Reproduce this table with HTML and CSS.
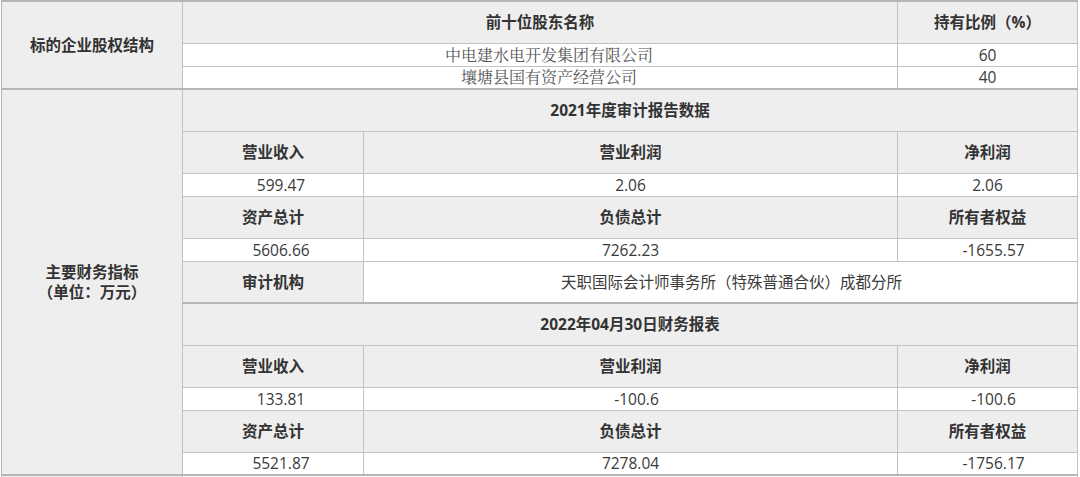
FILE: index.html
```html
<!DOCTYPE html>
<html lang="zh-CN">
<head>
<meta charset="utf-8">
<title>标的企业信息</title>
<link rel="stylesheet" href="styles.css">
</head>
<body>
<table class="info">
  <colgroup>
    <col class="c1">
    <col class="c2">
    <col class="c3">
    <col class="c4">
  </colgroup>
  <tbody>
    <tr class="sliver">
      <td></td><td></td><td colspan="2"></td>
    </tr>
    <tr class="hd sec">
      <th class="side" rowspan="3">标的企业股权结构</th>
      <th colspan="2">前十位股东名称</th>
      <th>持有比例（%）</th>
    </tr>
    <tr class="val">
      <td class="serif" colspan="2">中电建水电开发集团有限公司</td>
      <td>60</td>
    </tr>
    <tr class="val">
      <td class="serif" colspan="2">壤塘县国有资产经营公司</td>
      <td>40</td>
    </tr>

    <tr class="hd sec">
      <th class="side" rowspan="11">主要财务指标<br>（单位：万元）</th>
      <th colspan="3">2021年度审计报告数据</th>
    </tr>
    <tr class="hd">
      <th>营业收入</th><th>营业利润</th><th>净利润</th>
    </tr>
    <tr class="val">
      <td class="shift">599.47</td><td>2.06</td><td>2.06</td>
    </tr>
    <tr class="hd">
      <th>资产总计</th><th>负债总计</th><th>所有者权益</th>
    </tr>
    <tr class="val">
      <td class="shift">5606.66</td><td>7262.23</td><td class="nudge">-1655.57</td>
    </tr>
    <tr class="hd">
      <th>审计机构</th>
      <td class="plain" colspan="2">天职国际会计师事务所（特殊普通合伙）成都分所</td>
    </tr>
    <tr class="hd sec">
      <th colspan="3">2022年04月30日财务报表</th>
    </tr>
    <tr class="hd">
      <th>营业收入</th><th>营业利润</th><th>净利润</th>
    </tr>
    <tr class="val">
      <td class="shift">133.81</td><td class="nudge">-100.6</td><td class="nudge">-100.6</td>
    </tr>
    <tr class="hd">
      <th>资产总计</th><th>负债总计</th><th>所有者权益</th>
    </tr>
    <tr class="val">
      <td class="shift">5521.87</td><td>7278.04</td><td class="nudge">-1756.17</td>
    </tr>
    <tr class="tail sec">
      <th></th><td colspan="3"></td>
    </tr>
  </tbody>
</table>
</body>
</html>
```

FILE: styles.css
```css
html, body {
  margin: 0;
  padding: 0;
  background: #ffffff;
}

body {
  font-family: "Open Sans", "Noto Sans CJK SC", "Noto Sans", sans-serif;
  font-size: 15.5px;
  color: #333333;
}

.info {
  width: 1077px;
  margin-left: 1px;
  border-collapse: collapse;
  table-layout: fixed;
}

.c1 { width: 181px; }
.c2 { width: 181px; }
.c3 { width: 534px; }
.c4 { width: 180px; }

.info th,
.info td {
  border: 1px solid #c2c2c2;
  padding: 0;
  text-align: center;
  vertical-align: middle;
  line-height: 20px;
}

.info th {
  background: #eeeeee;
  font-weight: bold;
  color: #333333;
}

.info td {
  background: #ffffff;
  font-weight: normal;
  color: #3a3a3a;
}

.info td.plain {
  background: #ffffff;
  padding-left: 22px;
}

.info td.serif {
  font-family: "Noto Serif CJK SC", "Liberation Serif", serif;
  font-size: 16px;
  color: #555555;
  padding-left: 18px;
}

.info th.side {
  background: #eeeeee;
  border-left: 1px solid #b4b4b4;
}

.sliver td {
  height: 0;
  border-top: none;
}

.sec > th,
.sec > td {
  border-top: 2px solid #b6b6b6;
}

.hd { height: 42px; }
.val { height: 23px; }

.tail th,
.tail td {
  height: 2px;
  border-bottom: none;
}

.shift { padding-left: 16px !important; }
.nudge { padding-left: 12px !important; }
```
